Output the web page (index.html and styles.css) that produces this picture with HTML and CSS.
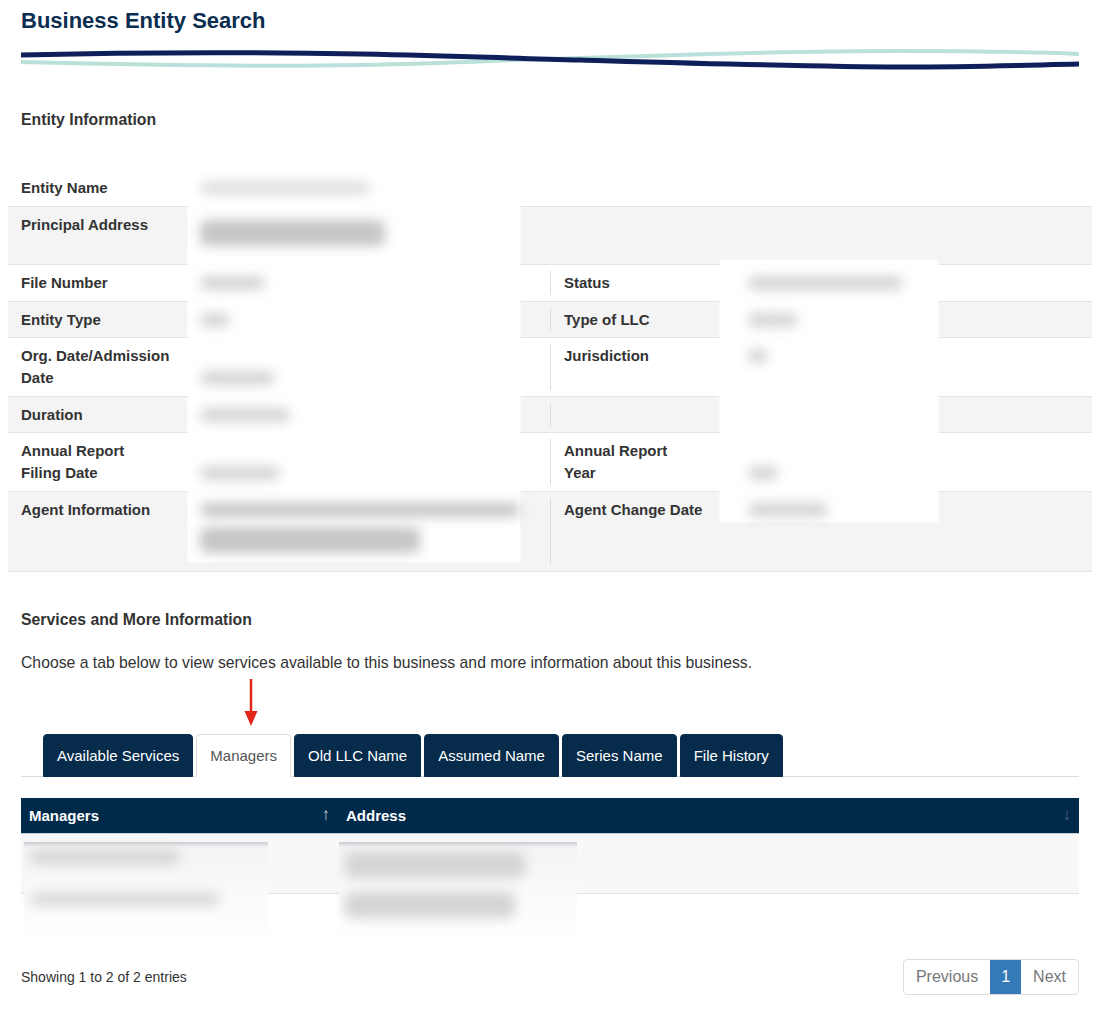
FILE: index.html
```html
<!DOCTYPE html>
<html lang="en">
<head>
    <meta charset="UTF-8">
    <title>Business Entity Search</title>
    <link rel="stylesheet" href="styles.css">
</head>
<body>
    <div class="page">
        <h1 class="title">Business Entity Search</h1>

        <!-- ondas del encabezado -->
        <svg class="wave" viewBox="0 0 1058 26" preserveAspectRatio="none">
            <path d="M0,16 C120,19 230,21 340,19 C440,17 480,14 560,12 C700,7 800,5 880,5 C960,5 1010,6 1058,8" fill="none" stroke="#b9e1da" stroke-width="4"/>
            <path d="M0,9 C120,6 230,6 340,8 C440,10 480,12 560,14 C700,18 800,21 880,21 C960,21 1010,19 1058,18" fill="none" stroke="#0f1f5a" stroke-width="5"/>
        </svg>

        <h3 class="section-title first">Entity Information</h3>

        <div class="info">
            <div class="redact-panel left"></div>
            <div class="redact-panel right"></div>

            <div class="row top">
                <div class="lbl">Entity Name</div>
                <div class="val"><span class="blur light w170"></span></div>
            </div>
            <div class="row alt">
                <div class="lbl">Principal Address</div>
                <div class="val two">
                    <span class="blur dark tall w185"></span>
                </div>
            </div>
            <div class="row split">
                <div class="lbl">File Number</div>
                <div class="val"><span class="blur w65"></span></div>
                <div class="lbl2">Status</div>
                <div class="val"><span class="blur w155"></span></div>
            </div>
            <div class="row split alt">
                <div class="lbl">Entity Type</div>
                <div class="val"><span class="blur w30"></span></div>
                <div class="lbl2">Type of LLC</div>
                <div class="val"><span class="blur w50"></span></div>
            </div>
            <div class="row split">
                <div class="lbl">Org. Date/Admission<br>Date</div>
                <div class="val two"><span class="gap"></span><span class="blur w75"></span></div>
                <div class="lbl2">Jurisdiction</div>
                <div class="val"><span class="blur w20"></span></div>
            </div>
            <div class="row split alt">
                <div class="lbl">Duration</div>
                <div class="val"><span class="blur w90"></span></div>
                <div class="lbl2"></div>
                <div class="val"></div>
            </div>
            <div class="row split">
                <div class="lbl">Annual Report<br>Filing Date</div>
                <div class="val two"><span class="gap"></span><span class="blur w80"></span></div>
                <div class="lbl2">Annual Report<br>Year</div>
                <div class="val"><span class="gap"></span><span class="blur w30"></span></div>
            </div>
            <div class="row split alt">
                <div class="lbl">Agent Information</div>
                <div class="val three">
                    <span class="blur dark w320"></span>
                    <span class="blur dark tall w220"></span>
                </div>
                <div class="lbl2">Agent Change Date</div>
                <div class="val"><span class="blur w80"></span></div>
            </div>
        </div>

        <h3 class="section-title">Services and More Information</h3>
        <p class="intro">Choose a tab below to view services available to this business and more information about this business.</p>

        <!-- flecha roja de la captura -->
        <svg class="arrow" width="20" height="48" viewBox="0 0 20 48">
            <line x1="10" y1="0" x2="10" y2="36" stroke="#e3261c" stroke-width="2.5"/>
            <polygon points="3.5,32 16.5,32 10,47" fill="#e3261c"/>
        </svg>

        <ul class="tabs">
            <li class="tab">Available Services</li>
            <li class="tab active">Managers</li>
            <li class="tab">Old LLC Name</li>
            <li class="tab">Assumed Name</li>
            <li class="tab">Series Name</li>
            <li class="tab">File History</li>
        </ul>

        <div class="grid-wrap">
            <table class="grid">
                <thead>
                    <tr>
                        <th class="col-man">Managers <span class="sort on">&uarr;</span></th>
                        <th>Address <span class="sort">&darr;</span></th>
                    </tr>
                </thead>
                <tbody>
                    <tr class="odd">
                        <td class="col-man"></td>
                        <td></td>
                    </tr>
                    <tr>
                        <td class="col-man"></td>
                        <td></td>
                    </tr>
                </tbody>
            </table>

            <div class="smudge man">
                <span class="blur w150"></span>
                <span class="blur faint w190 drop"></span>
            </div>
            <div class="smudge addr">
                <span class="blur tall w180"></span>
                <span class="blur tall w170 drop"></span>
            </div>
        </div>

        <div class="footer">
            <div class="count">Showing 1 to 2 of 2 entries</div>
            <div class="pager">
                <span class="pg">Previous</span>
                <span class="pg current">1</span>
                <span class="pg">Next</span>
            </div>
        </div>
    </div>
</body>
</html>
```

FILE: styles.css
```css
body {
    margin: 0;
    font-family: "Liberation Sans", Arial, sans-serif;
    color: #333;
    background-color: #fff;
}

.page {
    padding: 0 21px;
}

.title {
    margin: 0;
    padding-top: 8px;
    font-size: 22px;
    line-height: 26px;
    color: #0b2d50;
}

.wave {
    display: block;
    width: 100%;
    height: 26px;
    margin-top: 12px;
}

.section-title {
    margin: 0;
    font-size: 15.8px;
    line-height: 22px;
}

.section-title.first {
    margin-top: 37px;
    margin-bottom: 39px;
}

/* tabla de informacion */
.info {
    position: relative;
    margin: 0 -13px;
    border-bottom: 1px solid #e4e4e4;
}

.row {
    display: grid;
    grid-template-columns: 180px 362px 186px 356px;
    border-top: 1px solid #e4e4e4;
    font-size: 15px;
    line-height: 22px;
}

.row.top {
    border-top: none;
}

.row.alt {
    background-color: #f4f4f4;
}

.lbl {
    padding: 7px 0 6.5px 13px;
    font-weight: bold;
}

.val {
    padding: 7px 0 6.5px 12px;
    display: flex;
    flex-direction: column;
    min-height: 22px;
}

.val.two {
    min-height: 44px;
}

.val.three {
    min-height: 66px;
}

.lbl2 {
    position: relative;
    padding: 7px 0 6.5px 14px;
    font-weight: bold;
}

.lbl2::before {
    content: "";
    position: absolute;
    left: 0;
    top: 6px;
    bottom: 6px;
    border-left: 1px solid #dcdcdc;
}

.gap {
    height: 22px;
    flex-shrink: 0;
}

.blur {
    position: relative;
    z-index: 2;
    display: block;
    flex-shrink: 0;
    height: 14px;
    margin: 4px 0;
    background-color: #d4d4d4;
    border-radius: 7px;
    filter: blur(6px);
}

.blur.tall {
    height: 26px;
    margin-top: 6px;
}

.blur.light {
    background-color: #e0e0e0;
}

.blur.dark {
    background-color: #c6c6c6;
}

.blur.faint {
    background-color: #dadada;
}

.w20 { width: 20px; }
.w30 { width: 30px; }
.w50 { width: 50px; }
.w65 { width: 65px; }
.w75 { width: 75px; }
.w80 { width: 80px; }
.w90 { width: 90px; }
.w150 { width: 150px; }
.w155 { width: 155px; }
.w170 { width: 170px; }
.w180 { width: 180px; }
.w185 { width: 185px; }
.w190 { width: 190px; }
.w220 { width: 220px; }
.w320 { width: 320px; }

/* paneles blancos de la censura */
.redact-panel {
    position: absolute;
    z-index: 1;
    background-color: rgba(255, 255, 255, 0.93);
    box-shadow: 0 0 4px rgba(255, 255, 255, 0.9);
}

.redact-panel.left {
    left: 180px;
    top: 2px;
    width: 332px;
    height: 390px;
}

.redact-panel.right {
    left: 712px;
    top: 90px;
    width: 218px;
    height: 262px;
}

.info + .section-title {
    margin-top: 37px;
}

.intro {
    margin: 21px 0 0;
    font-size: 15.75px;
    line-height: 22px;
}

.arrow {
    display: block;
    margin: 5px 0 0 220px;
}

/* pestañas */
.tabs {
    display: flex;
    gap: 3px;
    margin: 7px 0 0;
    padding: 0 0 0 22px;
    list-style: none;
    border-bottom: 1px solid #ddd;
}

.tab {
    padding: 10px 13px;
    margin-bottom: -1px;
    font-size: 15px;
    line-height: 21px;
    color: #fff;
    background-color: #062b4b;
    border: 1px solid #062b4b;
    border-radius: 4px 4px 0 0;
}

.tab.active {
    color: #555;
    background-color: #fff;
    border-color: #ddd #ddd #fff;
}

/* tabla de managers */
.grid-wrap {
    position: relative;
    margin-top: 21px;
}

.grid {
    width: 100%;
    border-collapse: collapse;
    font-size: 15px;
}

.grid th {
    position: relative;
    padding: 7px 8px;
    line-height: 21px;
    text-align: left;
    color: #fff;
    background-color: #002a4a;
    border-bottom: 1px solid #c9d1d8;
}

.grid th.col-man {
    width: 301px;
}

.sort {
    position: absolute;
    right: 8px;
    top: 6px;
    font-size: 17px;
    font-weight: normal;
    color: #c0c8cf;
}

.sort:not(.on) {
    color: #4f6880;
}

.grid td {
    padding: 0;
}

.grid tr.odd td {
    height: 59px;
    background-color: #f8f8f8;
    border-bottom: 1px solid #e2e2e2;
}

.grid tr:not(.odd) td {
    height: 54px;
}

.smudge {
    position: absolute;
    z-index: 1;
    top: 44px;
    height: 103px;
    padding: 4px 6px;
    box-sizing: border-box;
    background: linear-gradient(#c9ccd1, #f2f3f4 5px, #f9f9f9 40%, #ffffff);
}

.smudge.man {
    left: 3px;
    width: 244px;
}

.smudge.addr {
    left: 318px;
    width: 238px;
}

.smudge .drop {
    margin-top: 28px;
}

.smudge.addr .drop {
    margin-top: 14px;
}

.footer {
    display: flex;
    justify-content: space-between;
    align-items: center;
    margin-top: 11px;
}

.count {
    font-size: 14px;
}

.pager {
    display: flex;
    border: 1px solid #ddd;
    border-radius: 4px;
    overflow: hidden;
}

.pg {
    padding: 7px 12px;
    font-size: 16px;
    line-height: 20px;
    color: #777;
}

.pg.current {
    padding: 7px 11px;
    color: #fff;
    background-color: #337ab7;
}
```
